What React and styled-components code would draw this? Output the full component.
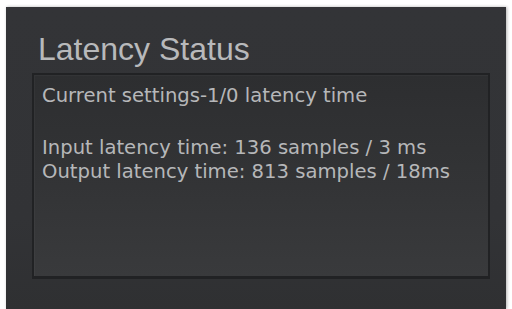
import React from "react";
import styled, { createGlobalStyle } from "styled-components";

const GlobalStyle = createGlobalStyle`
  html, body {
    margin: 0;
    padding: 0;
    background: #ffffff;
  }
  body {
    width: 512px;
    height: 309px;
    overflow: hidden;
  }
`;

const Page = styled.div`
  padding: 7px 6px 0 6px;
  height: 309px;
  box-sizing: border-box;
`;

const Panel = styled.div`
  height: 302px;
  box-sizing: border-box;
  padding: 24px 16px 0 26px;
  background: linear-gradient(180deg, #333437 0%, #323336 70%, #2f3032 100%);
  box-shadow: 1px 0 3px rgba(0, 0, 0, 0.3);
  display: flex;
  flex-direction: column;
`;

const Title = styled.h1`
  margin: 0 0 6px 6px;
  font-family: "Liberation Sans", Arial, sans-serif;
  font-weight: normal;
  font-size: 32px;
  line-height: 36px;
  color: #b8b9bb;
`;

const StatusBox = styled.div`
  height: 206px;
  box-sizing: border-box;
  padding: 9px 8px 0 8px;
  border: 2px solid #212224;
  border-bottom-width: 3px;
  background: linear-gradient(180deg, #2d2e30 0%, #333436 55%, #393a3c 100%);
  box-shadow: inset 1px 1px 0 rgba(255, 255, 255, 0.03);
`;

const Line = styled.div`
  font-family: "DejaVu Sans", Verdana, sans-serif;
  font-size: 19.6px;
  line-height: 24px;
  letter-spacing: 0;
  color: #b6b7b9;
  white-space: nowrap;
  margin-bottom: ${(p) => (p.$gap ? "28px" : "0")};
`;

export default function App() {
  return (
    <>
      <GlobalStyle />
      <Page>
        <Panel>
          <Title>Latency Status</Title>
          <StatusBox>
            <Line $gap>Current settings-1/0 latency time</Line>
            <Line>Input latency time: 136 samples / 3 ms</Line>
            <Line>Output latency time: 813 samples / 18ms</Line>
          </StatusBox>
        </Panel>
      </Page>
    </>
  );
}
